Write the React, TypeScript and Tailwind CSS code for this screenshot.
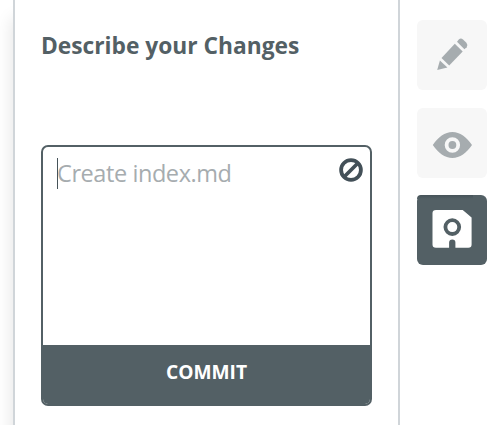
import type { ReactNode } from "react";

function ToolButton({ active = false, label, children }: { active?: boolean; label: string; children: ReactNode }) {
  return (
    <button
      aria-label={label}
      className={
        active
          ? "relative block size-[70px] rounded-md bg-[#536065] text-white"
          : "block size-[70px] rounded-md bg-[#f7f7f7] text-[#a6acaf]"
      }
    >
      {active && (
        <span className="absolute top-0 left-0 h-1 w-14 rounded-tl-md bg-linear-to-b from-[#465359] to-[#536065]" />
      )}
      <svg viewBox="0 0 70 70" className="relative block size-full" fill="currentColor">
        {children}
      </svg>
    </button>
  );
}

export default function App() {
  return (
    <div className="flex h-[425px] w-[502px] overflow-hidden bg-white pl-[13px] font-['Open_Sans','Noto_Sans',sans-serif] text-[#536065]">
      <main className="h-full w-[387px] shrink-0 border-x-2 border-[#d0d5d9] bg-white px-[26px] pt-[29px] shadow-[-1px_18px_16px_rgba(0,0,0,0.11)]">
        <h1 className="h-[116px] text-[22.75px] leading-[33px] font-bold whitespace-nowrap">Describe your Changes</h1>
        <section className="flex h-[261px] w-[331px] flex-col overflow-hidden rounded-[7px] border-2 border-[#536065]">
          <div className="flex h-[198px] items-start justify-between pt-[11px] pr-[7px] pl-[14px]">
            <div className="flex h-[31px] items-center border-l border-[#465359] text-[23.5px] leading-[31px] tracking-[-0.42px] text-[#a6acaf]">
              <span className="-ml-px">Create index.md</span>
            </div>
            <svg viewBox="0 0 24 24" className="size-6" fill="none" stroke="#435058" strokeWidth="3.8">
              <circle cx="12" cy="12" r="9.9" />
              <path d="M5 19 19 5" />
            </svg>
          </div>
          <button className="flex-1 bg-[#536065] pb-[5px] text-[19.2px] leading-6 font-bold text-white">COMMIT</button>
        </section>
      </main>
      <nav className="relative flex flex-1 shrink-0 flex-col bg-white pt-5 pl-[17px]">
        <div className="h-[88px]">
          <ToolButton label="Edit">
            <path d="M20.2 50 22.9 40.6 30.4 47.4Z" />
            <path d="M24.5 38 37.8 23.8 45.7 31.4 32.2 45.6Z" />
            <path d="M40 21.7 42 19.3Q43.9 17.8 46 19.4L49.4 22.7Q51.2 25 49.7 27.2L47.4 29.3Z" />
          </ToolButton>
        </div>
        <div className="h-[87px]">
          <ToolButton label="Preview">
            <path
              fillRule="evenodd"
              d="M15.8 37C21 29.3 28 24 35.4 24S49.8 29.3 55 37C49.8 44.7 42.8 50 35.4 50S21 44.7 15.8 37ZM35.4 29.3a7.7 7.7 0 1 0 0 15.4a7.7 7.7 0 1 0 0-15.4Z"
            />
            <circle cx="35.4" cy="37" r="3.9" />
          </ToolButton>
        </div>
        <ToolButton label="Save" active>
          <path
            fillRule="evenodd"
            d="M19 14.9H45.7L54.6 22.4V49.5Q54.6 52.8 51.3 52.8H38.4V47.5Q38.4 44.6 35.3 44.6T32.1 47.5V52.8H19Q15.5 52.8 15.5 49.5V18Q15.5 14.9 19 14.9ZM35.3 23.3a8.8 8.8 0 1 0 0 17.6a8.8 8.8 0 1 0 0-17.6ZM35.3 27.1a5 5 0 1 1 0 10a5 5 0 1 1 0-10Z"
          />
        </ToolButton>
      </nav>
    </div>
  );
}
